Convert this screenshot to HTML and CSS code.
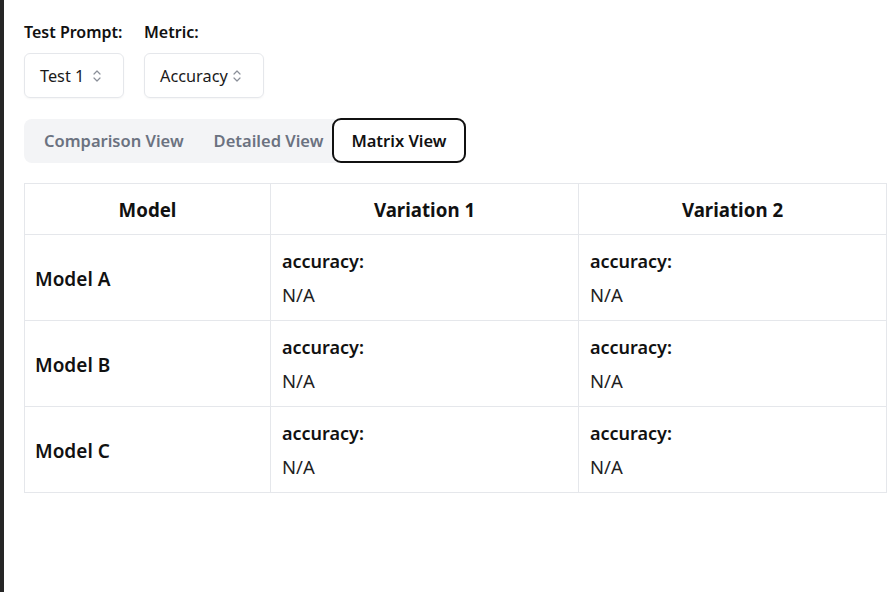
FILE: index.html
```html
<!DOCTYPE html>
<html>
<head>
<meta charset="utf-8">
<link rel="stylesheet" href="styles.css">
</head>
<body>
<div class="frame">
  <div class="edge"></div>
  <main class="page">
    <div class="controls">
      <div class="field">
        <div class="label">Test Prompt:</div>
        <div class="select sel-test">
          <span>Test 1</span>
          <svg class="chev" width="8" height="14" viewBox="0 0 8 14"><path d="M1 5 L4 2 L7 5 M1 9 L4 12 L7 9" fill="none" stroke="#8a8f98" stroke-width="1.2" stroke-linecap="round" stroke-linejoin="round"/></svg>
        </div>
      </div>
      <div class="field">
        <div class="label">Metric:</div>
        <div class="select sel-metric">
          <span>Accuracy</span>
          <svg class="chev" width="8" height="14" viewBox="0 0 8 14"><path d="M1 5 L4 2 L7 5 M1 9 L4 12 L7 9" fill="none" stroke="#8a8f98" stroke-width="1.2" stroke-linecap="round" stroke-linejoin="round"/></svg>
        </div>
      </div>
    </div>

    <div class="tabs">
      <div class="tab">Comparison View</div>
      <div class="tab">Detailed View</div>
      <div class="tab active">Matrix View</div>
    </div>

    <table class="matrix">
      <colgroup>
        <col class="c-model">
        <col class="c-var">
        <col class="c-var">
      </colgroup>
      <thead>
        <tr><th>Model</th><th>Variation 1</th><th>Variation 2</th></tr>
      </thead>
      <tbody>
        <tr>
          <td class="model">Model A</td>
          <td><div class="metric">accuracy:</div><div class="value">N/A</div></td>
          <td><div class="metric">accuracy:</div><div class="value">N/A</div></td>
        </tr>
        <tr>
          <td class="model">Model B</td>
          <td><div class="metric">accuracy:</div><div class="value">N/A</div></td>
          <td><div class="metric">accuracy:</div><div class="value">N/A</div></td>
        </tr>
        <tr>
          <td class="model">Model C</td>
          <td><div class="metric">accuracy:</div><div class="value">N/A</div></td>
          <td><div class="metric">accuracy:</div><div class="value">N/A</div></td>
        </tr>
      </tbody>
    </table>
  </main>
</div>
</body>
</html>
```

FILE: styles.css
```css
* { box-sizing: border-box; }
html, body { margin: 0; padding: 0; background: #ffffff; }
body {
  font-family: "Noto Sans", "Open Sans", "Liberation Sans", sans-serif;
  color: #111111;
}
.frame {
  display: flex;
  min-height: 592px;
  width: 894px;
  overflow: hidden;
}
.edge {
  width: 4px;
  flex: none;
  background: #262626;
}
.page {
  padding: 20px 0 0 20px;
  flex: 1;
}
.controls {
  display: flex;
  gap: 20px;
}
.field {
  display: flex;
  flex-direction: column;
  gap: 9px;
}
.label {
  font-size: 16px;
  font-weight: 600;
  line-height: 24px;
  color: #111111;
}
.select {
  height: 45px;
  border: 1px solid #e5e7eb;
  border-radius: 6px;
  display: flex;
  align-items: center;
  justify-content: space-between;
  padding: 0 22px 0 15px;
  font-size: 16.3px;
  color: #1a1a1a;
  box-shadow: 0 1px 2px rgba(0,0,0,0.04);
}
.sel-test { width: 100px; }
.sel-metric { width: 120px; }
.chev { flex: none; }

.tabs {
  margin-top: 21px;
  height: 44px;
  display: inline-flex;
  align-items: center;
  background: #f3f4f6;
  border-radius: 8px;
  padding: 0 0 0 5px;
}
.tab {
  font-size: 16.5px;
  font-weight: 600;
  color: #6b7280;
  padding: 0 15px;
  line-height: 24px;
  white-space: nowrap;
}
.tab.active {
  height: 45px;
  margin-top: -1px;
  margin-left: -6px;
  display: flex;
  align-items: center;
  padding: 0 17px;
  border: 2px solid #111111;
  border-radius: 9px;
  background: #ffffff;
  color: #111111;
}

.matrix {
  display: table;
  margin-top: 20px;
  border-collapse: collapse;
  table-layout: fixed;
  width: 862px;
}
.c-model { width: 246px; }
.c-var { width: 308px; }
.matrix th, .matrix td {
  border: 1px solid #e5e7eb;
}
.matrix th {
  height: 51px;
  font-size: 18.7px;
  font-weight: 700;
  line-height: 28px;
  padding: 2px 10px 0;
  text-align: center;
  color: #111111;
}
.matrix td {
  height: 86px;
  padding: 11px 11px;
  vertical-align: middle;
  text-align: left;
}
.matrix td.model {
  font-size: 19px;
  font-weight: 600;
  line-height: 28px;
  padding: 13px 10px 11px;
}
.metric {
  font-size: 18px;
  font-weight: 600;
  line-height: 28px;
}
.value {
  margin-top: 6px;
  font-size: 18.5px;
  font-weight: 400;
  line-height: 28px;
  color: #1f1f1f;
}
```
